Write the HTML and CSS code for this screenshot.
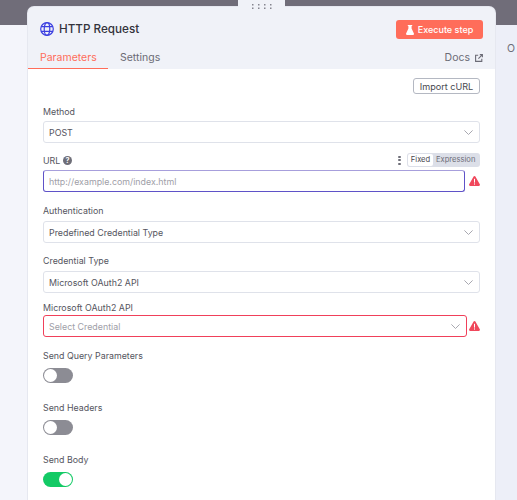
FILE: index.html
```html
<!DOCTYPE html>
<html lang="en">
<head>
<meta charset="utf-8">
<title>HTTP Request</title>
<link rel="stylesheet" href="styles.css">
</head>
<body>
<div class="scrim"></div>
<div class="output-label">O</div>
<main class="panel">
  <div class="handle">
    <svg width="20" height="6" viewBox="0 0 20 6"><g fill="#85858f"><rect x="0" y="0" width="1.500" height="1.500"/><rect x="6" y="0" width="1.500" height="1.500"/><rect x="12" y="0" width="1.500" height="1.500"/><rect x="18" y="0" width="1.500" height="1.500"/><rect x="0" y="3.500" width="1.500" height="1.500"/><rect x="6" y="3.500" width="1.500" height="1.500"/><rect x="12" y="3.500" width="1.500" height="1.500"/><rect x="18" y="3.500" width="1.500" height="1.500"/></g></svg>
  </div>
  <header class="head">
    <div class="title-row">
      <div class="title">
        <svg width="14" height="14" viewBox="0 0 14 14" fill="none" stroke="#3b3fe0" stroke-width="1.200"><circle cx="7" cy="7" r="6.300"/><ellipse cx="7" cy="7" rx="2.800" ry="6.300"/><path d="M1.200 4.700h11.600M1.200 9.300h11.600"/></svg>
        <span>HTTP Request</span>
      </div>
      <button class="exec">
        <svg width="8" height="10" viewBox="0 0 8 10"><path d="M1.800 0h4.400v1H5.600v2.600l2.300 5c.3.600-.1 1.400-.8 1.400H.9C.2 10-.2 9.200.1 8.600l2.300-5V1h-.6z" fill="#fff"/></svg>
        <span>Execute step</span>
      </button>
    </div>
    <nav class="tabs">
      <span class="tab active">Parameters</span>
      <span class="tab">Settings</span>
      <span class="docs">Docs
        <svg width="8" height="8" viewBox="0 0 8 8" fill="none" stroke="#6b6b76" stroke-width="1.100"><path d="M6.800 4.800v2.600H.6V1.200h2.600M3.400 4.600 7.400.6M4.800.6h2.600v2.600"/></svg>
      </span>
    </nav>
  </header>
  <section class="body">
    <div class="import-row"><button class="import">Import cURL</button></div>

    <div class="label method-label">Method</div>
    <div class="select">POST<svg class="chev" width="9" height="5" viewBox="0 0 9 5" fill="none" stroke="#a8a8b0" stroke-width="1"><path d="M.4.400 4.500 4.500 8.600.4"/></svg></div>

    <div class="label-row">
      <div class="label-inline">URL
        <svg width="9" height="9" viewBox="0 0 10 10"><circle cx="5" cy="5" r="5" fill="#6e6e78"/><text x="5" y="8" text-anchor="middle" class="help-q">?</text></svg>
      </div>
      <div class="mode">
        <span class="kebab"><i></i><i></i><i></i></span>
        <div class="toggle"><span class="toggle-on">Fixed</span><span class="toggle-off">Expression</span></div>
      </div>
    </div>
    <div class="with-warn">
      <div class="input">http://example.com/index.html</div>
      <svg class="warn" width="11" height="10" viewBox="0 0 11 10"><path d="M5.500 0c.4 0 .7.200.9.500l4.400 7.800c.4.700-.1 1.700-.9 1.700H1.100C.3 10-.2 9 .2 8.300L4.600.5C4.800.200 5.100 0 5.500 0z" fill="#f0485c"/><rect x="5" y="2.800" width="1" height="3.800" fill="#fff"/><rect x="5" y="7.400" width="1" height="1.200" fill="#fff"/></svg>
    </div>

    <div class="label auth-label">Authentication</div>
    <div class="select">Predefined Credential Type<svg class="chev" width="9" height="5" viewBox="0 0 9 5" fill="none" stroke="#a8a8b0" stroke-width="1"><path d="M.4.400 4.500 4.500 8.600.4"/></svg></div>

    <div class="label cred-label">Credential Type</div>
    <div class="select">Microsoft OAuth2 API<svg class="chev" width="9" height="5" viewBox="0 0 9 5" fill="none" stroke="#a8a8b0" stroke-width="1"><path d="M.4.400 4.500 4.500 8.600.4"/></svg></div>

    <div class="label oauth-label">Microsoft OAuth2 API</div>
    <div class="with-warn tight">
      <div class="select error">Select Credential<svg class="chev" width="9" height="5" viewBox="0 0 9 5" fill="none" stroke="#a8a8b0" stroke-width="1"><path d="M.4.400 4.500 4.500 8.600.4"/></svg></div>
      <svg class="warn" width="11" height="10" viewBox="0 0 11 10"><path d="M5.500 0c.4 0 .7.200.9.500l4.400 7.800c.4.700-.1 1.700-.9 1.700H1.100C.3 10-.2 9 .2 8.300L4.600.5C4.800.200 5.100 0 5.500 0z" fill="#f0485c"/><rect x="5" y="2.800" width="1" height="3.800" fill="#fff"/><rect x="5" y="7.400" width="1" height="1.200" fill="#fff"/></svg>
    </div>

    <div class="switches">
      <div class="switch-field">
        <div class="label">Send Query Parameters</div>
        <div class="switch"><i></i></div>
      </div>
      <div class="switch-field">
        <div class="label">Send Headers</div>
        <div class="switch"><i></i></div>
      </div>
      <div class="switch-field">
        <div class="label">Send Body</div>
        <div class="switch on"><i></i></div>
      </div>
    </div>
  </section>
</main>
</body>
</html>
```
FILE: styles.css
```css
* { box-sizing: border-box; }
body {
  margin: 0;
  height: 500px;
  overflow: hidden;
  background: linear-gradient(90deg, #f4f5fb 0 495px, #edeff8 495px);
  font-family: Inter, "Liberation Sans", sans-serif;
  color: #555560;
  font-size: 10px;
}
.scrim { position: absolute; left: 0; top: 0; width: 100%; height: 25px; background: #706d79; }
.output-label { position: absolute; left: 507px; top: 42px; font-size: 10.500px; line-height: 13px; color: #6e6e78; }
.panel {
  position: relative;
  margin: 7px 0 0 28px;
  width: 467px;
  height: 493px;
  border-radius: 6px 6px 0 0;
  background: #f0f2f8;
  box-shadow: 0 0 0 1px #e6e8f0;
}
.handle {
  position: absolute;
  left: 210px;
  top: -7px;
  width: 47px;
  height: 9px;
  background: #f0f2f8;
  display: flex;
  justify-content: center;
  padding-top: 4px;
}
.head { height: 62px; padding: 13px 12px 0; display: flex; flex-direction: column; justify-content: space-between; }
.title-row { display: flex; justify-content: space-between; align-items: flex-start; }
.title { display: flex; align-items: center; gap: 5px; font-size: 11.700px; color: #33333b; font-weight: 500; margin-top: 2px; }
.exec {
  display: flex; align-items: center; gap: 4px;
  height: 19px; width: 87px; justify-content: center;
  background: #ff6d5a; color: #fff; border: 0; border-radius: 3px;
  font: 500 9px Inter, sans-serif; padding: 0;
}
.tabs { display: flex; align-items: flex-start; margin: 0 -12px; font-size: 10.500px; line-height: 14px; }
.tab { padding: 4px 12px 0; height: 22px; color: #6b6b76; }
.tab.active { color: #ff6d5a; border-bottom: 1px solid #ff6d5a; width: 80px; }
.docs { margin-left: auto; padding: 4px 12px 0; color: #6b6b76; display: flex; gap: 5px; align-items: center; }
.body { background: #fff; height: 431px; padding: 9px 15px 0; }
.import-row { display: flex; justify-content: flex-end; }
.import {
  height: 16px; width: 67px; border: 1px solid #b4b8c2; border-radius: 3px;
  background: #fff; color: #47474f; font: 400 9.100px Inter, sans-serif; padding: 0;
}
.label { font-size: 8.850px; color: #555560; line-height: 12px; }
.method-label { margin: 12px 0 3px; }
.auth-label { margin: 13px 0 4px; }
.cred-label { margin: 12px 0 4px; }
.oauth-label { margin: 9px 0 1px; }
.select {
  height: 22px; border: 1px solid #dfe2ea; border-radius: 3px;
  background: #fff; padding: 0 6px 0 5px; display: flex; align-items: center; justify-content: space-between;
  font-size: 8.850px; color: #555560; flex: 1;
}
.chev { flex: none; }
.label-row { display: flex; justify-content: space-between; align-items: center; margin: 10px 0 3px; height: 14px; }
.label-inline { display: flex; align-items: center; gap: 3px; font-size: 8.850px; color: #555560; }
.help-q { font: 700 8px Inter, sans-serif; fill: #fff; }
.mode { display: flex; align-items: center; gap: 6px; }
.kebab { display: flex; flex-direction: column; gap: 1.500px; }
.kebab i { width: 3px; height: 2px; background: #6e6e78; border-radius: 1px; display: block; }
.toggle { display: flex; background: #dcdfe8; border-radius: 3px; padding: 1px; height: 14px; width: 73px; font-size: 7.600px; align-items: stretch; }
.toggle-on { background: #fff; border-radius: 2px; width: 25px; text-align: center; color: #47474f; line-height: 12px; }
.toggle-off { padding-left: 3px; color: #6e6e78; line-height: 12px; }
.with-warn { display: flex; align-items: center; gap: 4px; }
.with-warn.tight { gap: 2px; }
.warn { flex: none; }
.input {
  flex: 1; height: 22px; border: 1px solid #5f52c8; border-top-color: #a79fdc; border-radius: 3px;
  background: #fff; padding: 0 5px; display: flex; align-items: center; font-size: 8.850px; color: #a0a0a8;
}
.select.error { border-color: #f0405a; color: #a0a0a8; }
.switches { display: flex; flex-direction: column; gap: 19px; margin-top: 13px; }
.switch { width: 30px; height: 15px; border-radius: 8px; background: #8c8c94; margin-top: 6px; padding: 1px; display: flex; }
.switch i { width: 13px; height: 13px; border-radius: 50%; background: #fff; display: block; }
.switch.on { background: #13ca65; justify-content: flex-end; }
```
